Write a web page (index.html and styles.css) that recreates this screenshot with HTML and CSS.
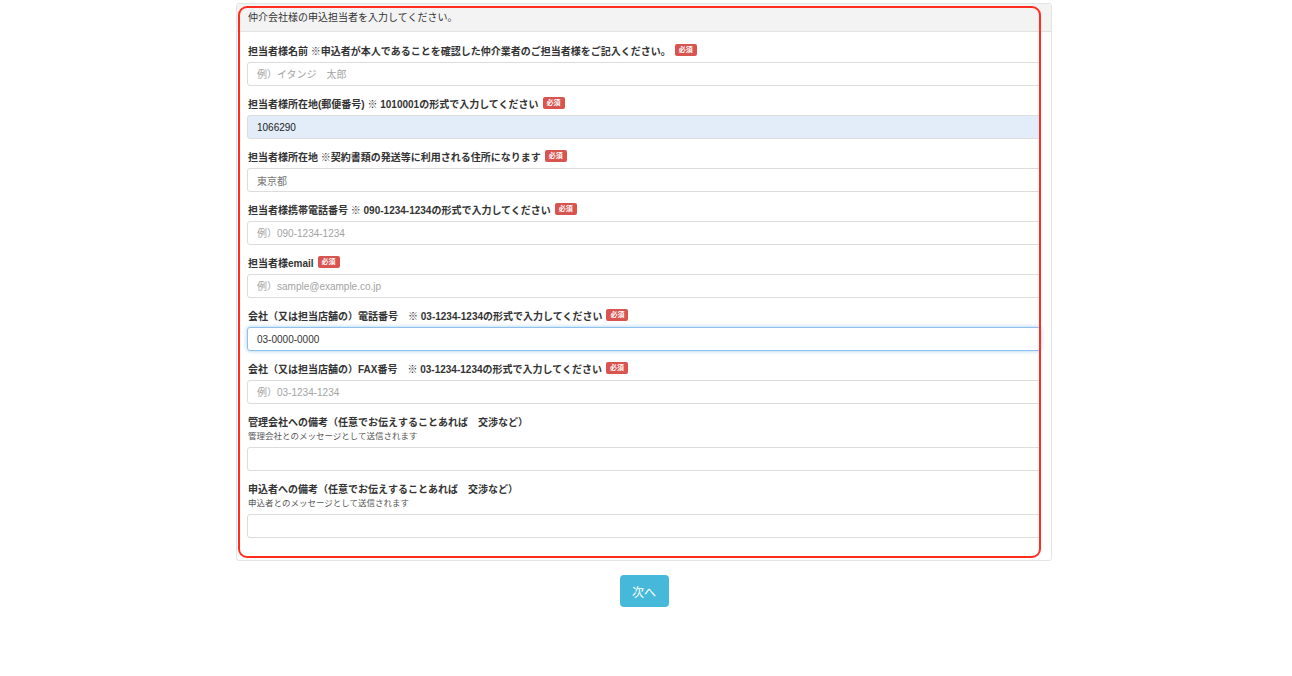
FILE: index.html
```html
<!DOCTYPE html>
<html lang="ja">
<head>
    <meta charset="UTF-8">
    <title>申込担当者</title>
    <link rel="stylesheet" href="styles.css">
</head>
<body>
<div class="page">
    <div class="wrap">
        <div class="panel">
            <div class="panel-heading">仲介会社様の申込担当者を入力してください。</div>
            <div class="panel-body">
                <div class="group">
                    <label>担当者様名前 ※申込者が本人であることを確認した仲介業者のご担当者様をご記入ください。<span class="req">必須</span></label>
                    <input type="text" class="field" placeholder="例）イタンジ　太郎">
                </div>
                <div class="group">
                    <label>担当者様所在地(郵便番号) ※ 1010001の形式で入力してください<span class="req">必須</span></label>
                    <input type="text" class="field filled" value="1066290">
                </div>
                <div class="group">
                    <label>担当者様所在地 ※契約書類の発送等に利用される住所になります<span class="req">必須</span></label>
                    <input type="text" class="field light" value="東京都">
                </div>
                <div class="group">
                    <label>担当者様携帯電話番号 ※ 090-1234-1234の形式で入力してください<span class="req">必須</span></label>
                    <input type="text" class="field" placeholder="例）090-1234-1234">
                </div>
                <div class="group">
                    <label>担当者様email<span class="req">必須</span></label>
                    <input type="text" class="field" placeholder="例）sample@example.co.jp">
                </div>
                <div class="group">
                    <label>会社（又は担当店舗の）電話番号　※ 03-1234-1234の形式で入力してください<span class="req">必須</span></label>
                    <input type="text" class="field focus" value="03-0000-0000">
                </div>
                <div class="group">
                    <label>会社（又は担当店舗の）FAX番号　※ 03-1234-1234の形式で入力してください<span class="req">必須</span></label>
                    <input type="text" class="field" placeholder="例）03-1234-1234">
                </div>
                <div class="group">
                    <label>管理会社への備考（任意でお伝えすることあれば　交渉など）</label>
                    <p class="help">管理会社とのメッセージとして送信されます</p>
                    <input type="text" class="field">
                </div>
                <div class="group">
                    <label>申込者への備考（任意でお伝えすることあれば　交渉など）</label>
                    <p class="help">申込者とのメッセージとして送信されます</p>
                    <input type="text" class="field">
                </div>
            </div>
            <div class="mark"></div>
        </div>
        <div class="actions">
            <button class="btn">次へ</button>
        </div>
    </div>
</div>
</body>
</html>
```

FILE: styles.css
```css
* {
    padding: 0;
    margin: 0;
    box-sizing: border-box;
}

body {
    font-family: "Liberation Sans", "Noto Sans CJK JP", sans-serif;
    color: #333;
    background: #fff;
}

.page {
    width: 1288px;
}

.wrap {
    width: 816px;
    margin: 0 auto;
}

.panel {
    position: relative;
    margin-top: 3px;
    border: 1px solid #e4e4e4;
    border-radius: 3px;
}

.panel-heading {
    height: 28px;
    line-height: 27px;
    padding: 0 11px;
    font-size: 10px;
    background: #f3f3f3;
    border-bottom: 1px solid #e2e2e2;
}

.panel-body {
    padding: 11px 10px 12px;
}

.group {
    margin-bottom: 10px;
}

.group label {
    display: flex;
    align-items: center;
    height: 14px;
    padding-left: 1px;
    margin-bottom: 5px;
    font-size: 10px;
    font-weight: bold;
    color: #333;
    white-space: nowrap;
}

.req {
    display: inline-block;
    height: 12px;
    line-height: 12px;
    padding: 0 4px;
    margin-left: 4px;
    font-size: 7px;
    font-weight: bold;
    color: #fff;
    background: #d9534f;
    border-radius: 2px;
}

.help {
    height: 12px;
    line-height: 12px;
    padding-left: 1px;
    margin-top: -3px;
    margin-bottom: 5px;
    font-size: 8.5px;
    color: #555;
}

.field {
    display: block;
    width: 100%;
    height: 24px;
    padding: 0 9px;
    font-family: "Liberation Sans", "Noto Sans CJK JP", sans-serif;
    font-size: 10px;
    color: #333;
    background: #fff;
    border: 1px solid #dcdcdc;
    border-radius: 3px;
    outline: none;
}

.field::placeholder {
    color: #a3a3a3;
}

.field.light {
    color: #777;
}

.field.filled {
    background: #e3edfa;
    color: #222;
}

.field.focus {
    border-color: #8fc1ee;
    box-shadow: 0 0 4px rgba(102, 175, 233, .6);
}

.mark {
    position: absolute;
    left: 1px;
    top: 2px;
    width: 803px;
    height: 552px;
    border: 2px solid #ff2d1f;
    border-radius: 9px;
    pointer-events: none;
}

.actions {
    display: flex;
    justify-content: center;
    margin-top: 14px;
}

.btn {
    width: 49px;
    height: 32px;
    font-family: "Liberation Sans", "Noto Sans CJK JP", sans-serif;
    font-size: 12px;
    color: #fff;
    background: #46b9db;
    border: 0;
    border-radius: 4px;
    cursor: pointer;
}
```
